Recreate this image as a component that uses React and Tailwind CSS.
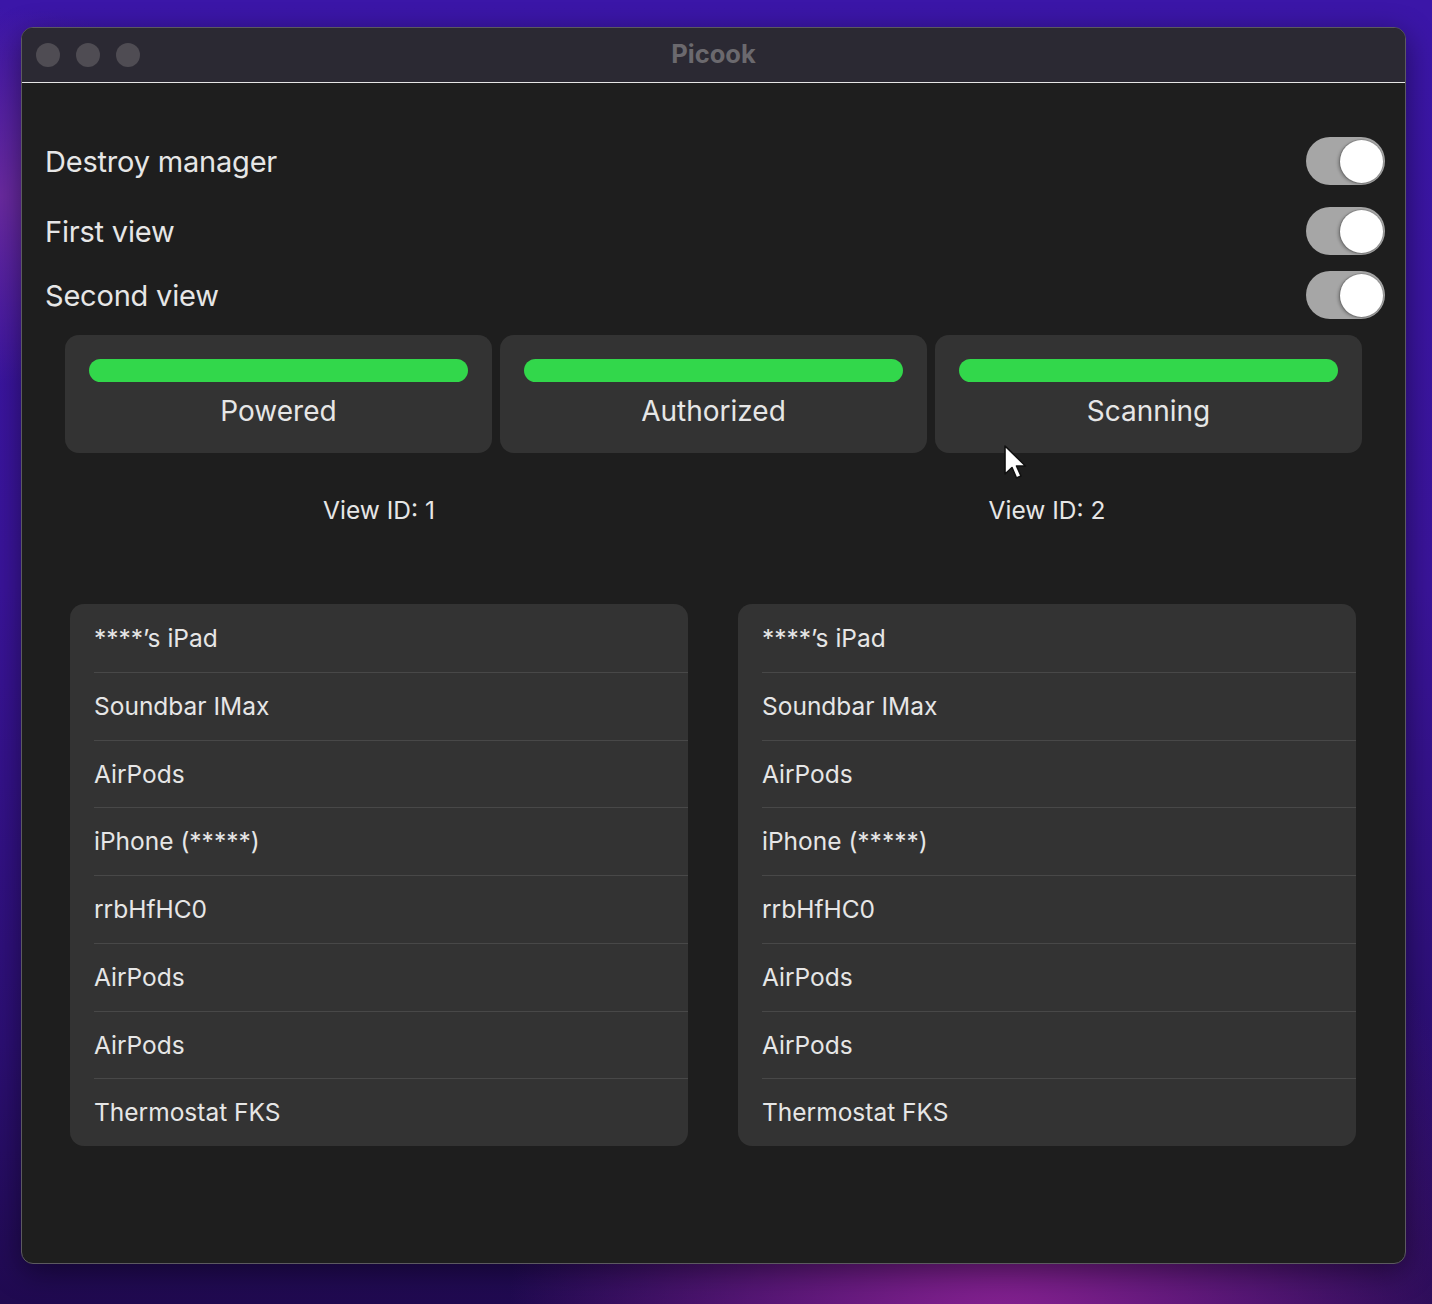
import React from "react";

const devices = [
  "****\u2019s iPad",
  "Soundbar IMax",
  "AirPods",
  "iPhone (*****)",
  "rrbHfHC0",
  "AirPods",
  "AirPods",
  "Thermostat FKS",
];

function Toggle() {
  return (
    <div className="w-[79px] h-[48px] rounded-full bg-[#a6a6a6] flex items-center justify-end pr-[2px]">
      <div className="w-[43px] h-[43px] rounded-full bg-white shadow-[0_0_0_1px_rgba(0,0,0,0.12),-2px_1px_3px_rgba(0,0,0,0.25)]" />
    </div>
  );
}

function ToggleRow({ label, className }) {
  return (
    <div className={"flex items-center justify-between h-[48px] pl-[23px] pr-[20px] " + className}>
      <span className="text-[29px] leading-none text-[#e6e6e6] tracking-[-0.2px]">{label}</span>
      <Toggle />
    </div>
  );
}

function StatusCard({ label }) {
  return (
    <div className="h-[118px] rounded-[14px] bg-[#333333] px-[24px] pt-[24px] flex flex-col items-stretch">
      <div className="h-[23px] rounded-full bg-[#32d74b]" />
      <div className="mt-[11px] h-[36px] flex items-center justify-center text-[28px] text-[#e6e6e6]">
        {label}
      </div>
    </div>
  );
}

function DeviceList() {
  return (
    <div className="rounded-[14px] bg-[#333333] overflow-hidden">
      {devices.map((d, i) => (
        <div
          key={i}
          className={
            "ml-[24px] h-[67.75px] flex items-center text-[24.5px] text-[#e6e6e6] " +
            (i > 0 ? "border-t border-[#484848]" : "")
          }
        >
          {d}
        </div>
      ))}
    </div>
  );
}

export default function App() {
  return (
    <div
      className="relative w-[1432px] h-[1304px] pt-[27px] pl-[21px] overflow-hidden bg-[radial-gradient(ellipse_at_70%_105%,#8a2294_0%,rgba(120,30,140,0.6)_18%,transparent_35%),radial-gradient(ellipse_at_0%_15%,#6a2aa0_0%,transparent_12%),linear-gradient(180deg,#3b16a8_0%,#3a149a_45%,#2c0f74_80%,#200a50_100%)]"
      style={{ fontFamily: "Inter, 'Noto Sans', sans-serif" }}
    >
      <div className="w-[1385px] h-[1237px] rounded-[12px] border border-[#5c5a60] overflow-hidden flex flex-col bg-[#1e1e1e] shadow-[0_8px_30px_rgba(0,0,0,0.45)]">
        <div className="relative h-[54px] shrink-0 bg-[#2b2933] flex items-center pl-[14px] gap-[16px]">
          <div className="w-[24px] h-[24px] rounded-full bg-[#4f4c53]" />
          <div className="w-[24px] h-[24px] rounded-full bg-[#4f4c53]" />
          <div className="w-[24px] h-[24px] rounded-full bg-[#4f4c53]" />
          <div className="absolute inset-0 flex items-center justify-center pb-[2px] pointer-events-none">
            <span className="text-[25.5px] font-bold text-[#6b696e]">Picook</span>
          </div>
        </div>
        <div className="h-px shrink-0 bg-[#e6e6e6]" />
        <div className="flex-1 flex flex-col">
          <ToggleRow label="Destroy manager" className="mt-[54px]" />
          <ToggleRow label="First view" className="mt-[22px]" />
          <ToggleRow label="Second view" className="mt-[16px]" />

          <div className="mt-[16px] px-[43px] grid grid-cols-3 gap-[8px]">
            <StatusCard label="Powered" />
            <StatusCard label="Authorized" />
            <StatusCard label="Scanning" />
          </div>

          <div className="mt-[42px] pl-[48px] pr-[49px] grid grid-cols-2 gap-[50px]">
            <div className="h-[30px] flex items-center justify-center text-[24.5px] text-[#e6e6e6]">View ID: 1</div>
            <div className="h-[30px] flex items-center justify-center text-[24.5px] text-[#e6e6e6]">View ID: 2</div>
          </div>

          <div className="mt-[79px] pl-[48px] pr-[49px] grid grid-cols-2 gap-[50px]">
            <DeviceList />
            <DeviceList />
          </div>
        </div>
      </div>

      <svg
        className="absolute left-[1003px] top-[444px]"
        width="26"
        height="38"
        viewBox="0 0 26 38"
      >
        <path
          d="M2 2 L2 30 L9 23.5 L13.5 34 L18 32 L13.5 22 L22.5 22 Z"
          fill="#ffffff"
          stroke="#111111"
          strokeWidth="1.6"
          strokeLinejoin="round"
        />
      </svg>
    </div>
  );
}
